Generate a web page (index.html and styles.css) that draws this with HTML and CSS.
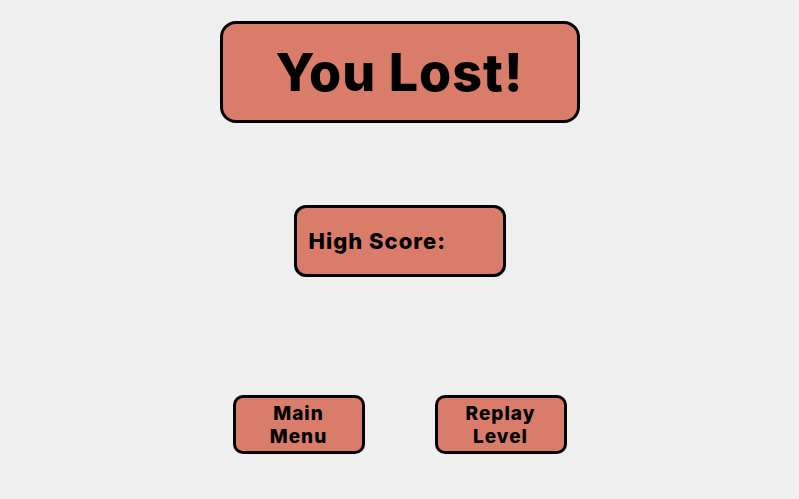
FILE: index.html
```html
<!DOCTYPE html>
<html>
<head>
<meta charset="utf-8">
<link rel="stylesheet" href="styles.css">
</head>
<body>
<main class="page">
  <h1 class="title">You Lost!</h1>
  <div class="score">High Score:</div>
  <div class="actions">
    <button class="btn">Main<br>Menu</button>
    <button class="btn">Replay<br>Level</button>
  </div>
</main>
</body>
</html>
```
FILE: styles.css
```css
html, body {
  margin: 0;
  padding: 0;
  background: #efefef;
}
body {
  font-family: "Inter", "Noto Sans", sans-serif;
  color: #000;
}
.page {
  display: flex;
  flex-direction: column;
  align-items: center;
  padding-top: 21px;
}
.title {
  box-sizing: border-box;
  width: 360px;
  height: 102px;
  margin: 0;
  background: #d97c6a;
  border: 3px solid #000;
  border-radius: 16px;
  display: flex;
  align-items: center;
  justify-content: center;
  font-size: 52px;
  font-weight: 800;
  letter-spacing: 1px;
}
.score {
  box-sizing: border-box;
  width: 212px;
  height: 72px;
  margin-top: 82px;
  background: #d97c6a;
  border: 3px solid #000;
  border-radius: 12px;
  display: flex;
  align-items: center;
  padding-left: 12px;
  font-size: 22px;
  font-weight: 800;
  letter-spacing: 1px;
}
.actions {
  display: flex;
  gap: 70px;
  margin-top: 118px;
}
.btn {
  box-sizing: border-box;
  width: 132px;
  height: 59px;
  background: #d97c6a;
  border: 3px solid #000;
  border-radius: 10px;
  font-family: inherit;
  font-size: 19px;
  font-weight: 800;
  line-height: 23px;
  letter-spacing: 1px;
  color: #000;
  padding: 0;
}
```
